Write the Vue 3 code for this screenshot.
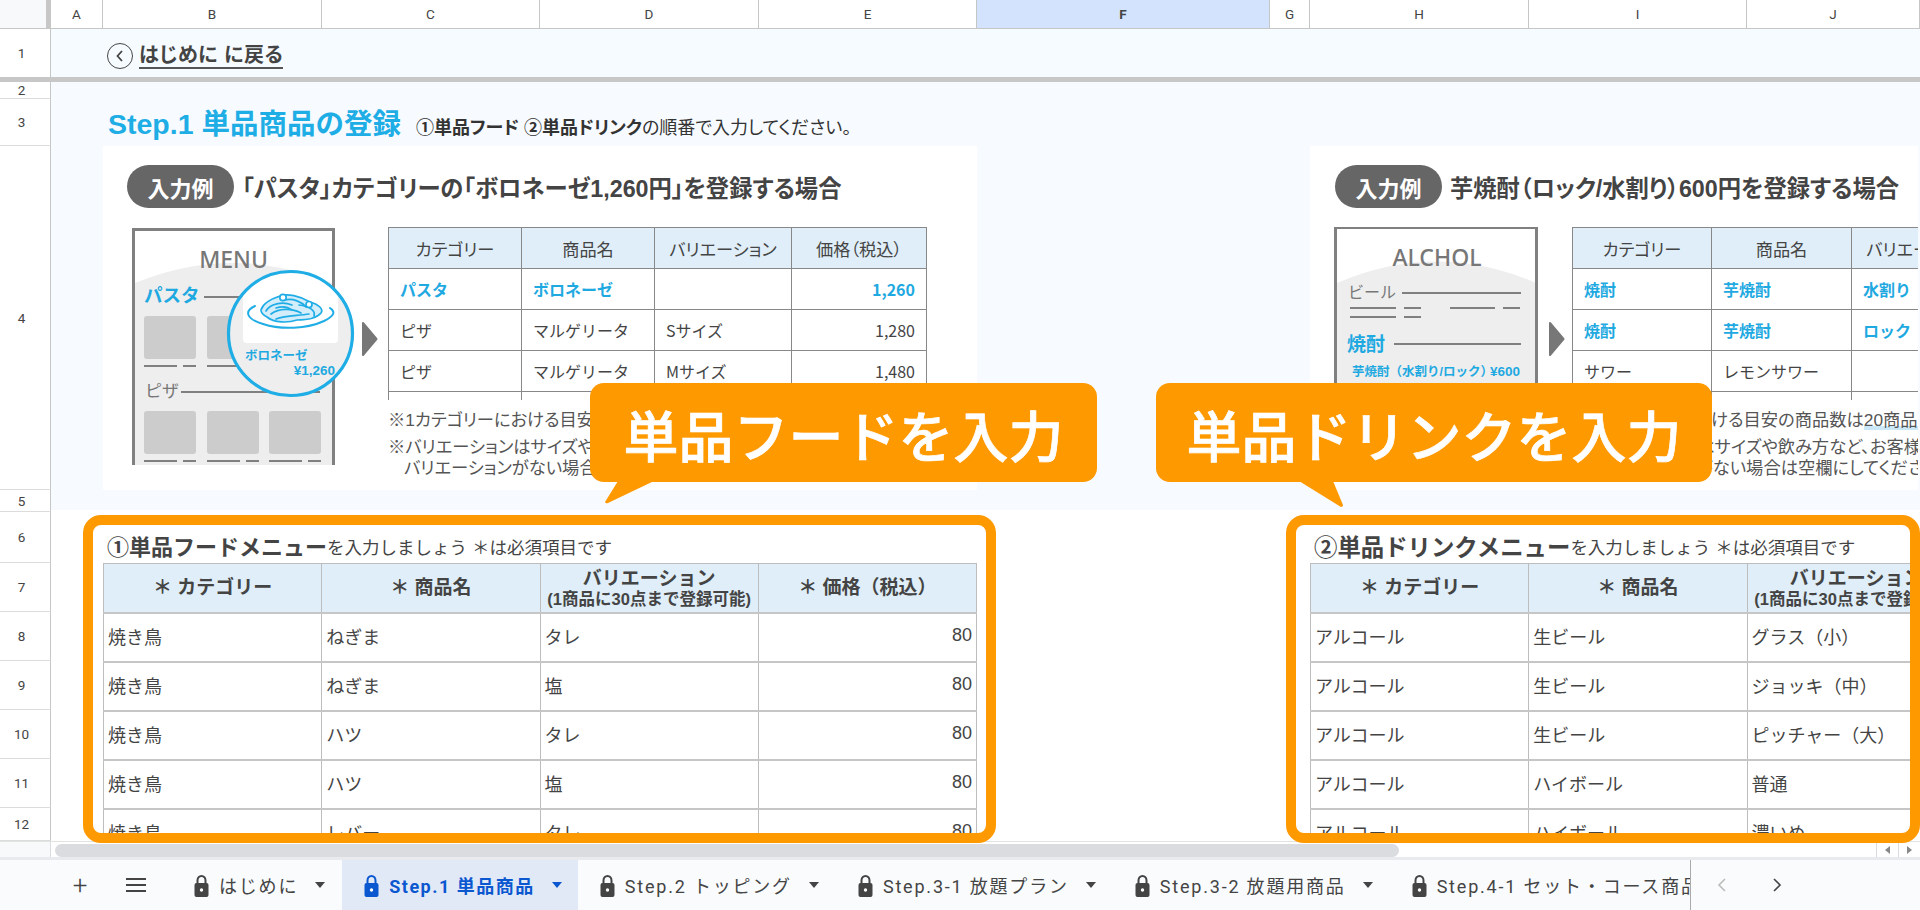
<template>
  <div class="app">
    <!-- 列ヘッダー -->
    <div class="col-head">
      <div class="corner"></div>
      <div
        v-for="col in columns"
        :key="col.name"
        class="col-cell"
        :class="{ selected: col.name === 'F' }"
        :style="{ width: col.w + 'px' }"
      >{{ col.name }}</div>
    </div>

    <div class="sheet">
      <!-- 固定行 -->
      <div class="frozen">
        <div class="row-num first">1</div>
        <div class="back-row">
          <span class="back-circle">
            <svg width="12" height="14" viewBox="0 0 12 14"><path d="M8 2 L3.5 7 L8 12" fill="none" stroke="#444" stroke-width="1.8" /></svg>
          </span>
          <span class="back-text">はじめに に戻る</span>
        </div>
      </div>

      <div class="sheet-body">
        <div class="gutter">
          <div
            v-for="row in rows"
            :key="row.n"
            class="row-num"
            :style="{ height: row.h + 'px' }"
          >{{ row.n }}</div>
        </div>

        <div class="content">
          <div class="band">
            <div class="title-row">
              <span class="title">Step.1 単品商品の登録</span>
              <span class="title-sub"><b>①単品フード ②単品ドリンク</b>の順番で入力してください。</span>
            </div>

            <div class="examples">
              <div v-for="ex in examples" :key="ex.id" class="card" :class="ex.id">
                <div class="card-head">
                  <span class="pill">入力例</span>
                  <span class="card-title">{{ ex.title }}</span>
                </div>
                <div class="card-body">
                  <!-- メニューのイラスト -->
                  <svg v-if="ex.id === 'food'" class="art" width="265" height="238" viewBox="123 227 265 238">
                    <defs><clipPath id="lens"><circle cx="290.5" cy="333.5" r="62" /></clipPath></defs>
                    <path d="M135 283 Q233 243 332 283 V465 H135 Z" fill="#eee" />
                    <path d="M133.5 465 V229.5 H333.5 V465" fill="none" stroke="#808080" stroke-width="3" />
                    <text x="233.5" y="268" class="art-head">MENU</text>
                    <text x="144" y="302" class="art-blue" font-size="18.5">パスタ</text>
                    <line x1="204" y1="297" x2="320" y2="297" class="art-line" />
                    <rect v-for="x in [144, 207, 269]" :key="'a' + x" :x="x" y="316" width="52" height="43" rx="3" fill="#ccc" />
                    <g v-for="x in [144, 207, 269]" :key="'b' + x">
                      <line :x1="x" y1="366" :x2="x + 33" y2="366" class="art-line" />
                      <line :x1="x + 39" y1="366" :x2="x + 52" y2="366" class="art-line" />
                    </g>
                    <text x="145" y="397" class="art-gray" font-size="17">ピザ</text>
                    <line x1="181" y1="392" x2="320" y2="392" class="art-line" />
                    <rect v-for="x in [144, 207, 269]" :key="'c' + x" :x="x" y="411" width="52" height="43" rx="3" fill="#ccc" />
                    <g v-for="x in [144, 207, 269]" :key="'d' + x">
                      <line :x1="x" y1="461" :x2="x + 33" y2="461" class="art-line" />
                      <line :x1="x + 39" y1="461" :x2="x + 52" y2="461" class="art-line" />
                    </g>
                    <circle cx="290.5" cy="333.5" r="62" fill="#eee" />
                    <rect x="243" y="260" width="95" height="83" rx="4" fill="#fff" clip-path="url(#lens)" />
                    <circle cx="290.5" cy="333.5" r="62" fill="none" stroke="#1fade6" stroke-width="3.2" />
                    <g fill="none" stroke="#1fade6" stroke-width="1.7" stroke-linecap="round">
                      <path d="M255 306 C244 311 246 319 263 324 C281 330 307 329 324 321 C334 316 336 312 330 308" stroke-width="2" />
                      <path d="M261 310 C263 303 271 299 280 296 C287 293 300 296 310 302 C318 304 324 309 321 313 C316 319 304 320 297 320 C288 323 274 323 267 317 C263 315 261 313 261 310 Z" fill="#d4edfb" />
                      <path d="M266 311 C270 304 282 301 292 305" />
                      <path d="M271 314 C279 308 292 308 301 313" />
                      <path d="M276 319 C286 315 298 316 309 314" />
                      <path d="M299 305 C308 306 316 310 314 316" />
                      <path d="M285 300 C293 298 302 302 306 307" />
                      <path d="M276 308 C282 306 288 307 292 310" />
                      <circle cx="283" cy="297.5" r="3.2" fill="#fff" />
                      <circle cx="309" cy="304.5" r="3" fill="#fff" />
                    </g>
                    <text x="245" y="360" class="art-blue" font-size="12.5">ボロネーゼ</text>
                    <text x="335" y="375" class="art-blue art-end" font-size="13.5">¥1,260</text>
                    <path d="M363 323 L376.5 339 L363 355 Z" fill="#777" stroke="#777" stroke-width="2" stroke-linejoin="round" />
                  </svg>
                  <svg v-else class="art" width="242" height="238" viewBox="1330 227 242 238">
                    <path d="M1337 283 Q1437 240 1536 283 V465 H1337 Z" fill="#eee" />
                    <path d="M1335.5 465 V227.5 H1536.5 V465" fill="none" stroke="#808080" stroke-width="3" />
                    <text x="1437" y="266" class="art-head">ALCHOL</text>
                    <text x="1348" y="298" class="art-gray" font-size="16">ビール</text>
                    <line x1="1402" y1="293" x2="1521" y2="293" class="art-line" />
                    <g class="art-line">
                      <line x1="1350" y1="308" x2="1396" y2="308" />
                      <line x1="1404" y1="308" x2="1421" y2="308" />
                      <line x1="1450" y1="308" x2="1495" y2="308" />
                      <line x1="1503" y1="308" x2="1520" y2="308" />
                      <line x1="1350" y1="317" x2="1396" y2="317" />
                      <line x1="1404" y1="317" x2="1421" y2="317" />
                    </g>
                    <text x="1347" y="351" class="art-blue" font-size="19">焼酎</text>
                    <line x1="1394" y1="344" x2="1521" y2="344" class="art-line" />
                    <text x="1352" y="376" class="art-blue" font-size="12.5">芋焼酎（水割り/ロック）</text>
                    <text x="1520" y="376" class="art-blue art-end" font-size="13.5">¥600</text>
                    <path d="M1550 323 L1563.5 339 L1550 355 Z" fill="#777" stroke="#777" stroke-width="2" stroke-linejoin="round" />
                  </svg>

                  <div class="ex-side">
                    <div class="ex-table-wrap">
                      <table class="ex-table">
                        <colgroup><col v-for="w in ex.cols" :key="w" :style="{ width: w + 'px' }" /></colgroup>
                        <tr>
                          <th>カテゴリー</th><th>商品名</th><th>バリエーション</th><th>価格（税込）</th>
                        </tr>
                        <tr v-for="(r, i) in ex.rows" :key="i" :class="{ hit: r.hit }">
                          <td>{{ r.cat }}</td>
                          <td>{{ r.name }}</td>
                          <td>{{ r.vari }}</td>
                          <td class="num">{{ r.price }}</td>
                        </tr>
                        <tr><td></td><td></td><td></td><td></td></tr>
                      </table>
                    </div>
                    <div class="notes">
                      <p>※1カテゴリーにおける目安の商品数は<span class="mark">20商品</span></p>
                      <p class="second">※バリエーションはサイズや飲み方など、お客様</p>
                      <p class="third">バリエーションがない場合は空欄にしてください。</p>
                    </div>
                  </div>
                </div>
              </div>
            </div>
          </div>

          <!-- 入力シート -->
          <div class="menus">
            <div v-for="m in menus" :key="m.id" class="menu" :class="m.id">
              <div class="menu-label">
                <b>{{ m.label }}</b><span>を入力しましょう ＊は必須項目です</span>
              </div>
              <table class="menu-table">
                <tr class="menu-head">
                  <th>＊ カテゴリー</th>
                  <th>＊ 商品名</th>
                  <th class="vari">バリエーション<small>(1商品に30点まで登録可能)</small></th>
                  <th>＊ 価格（税込）</th>
                </tr>
                <tr v-for="(r, i) in m.rows" :key="i">
                  <td>{{ r[0] }}</td>
                  <td>{{ r[1] }}</td>
                  <td>{{ r[2] }}</td>
                  <td class="num">{{ r[3] }}</td>
                </tr>
              </table>
            </div>
          </div>
        </div>
      </div>
    </div>

    <!-- スクロールバー -->
    <div class="scroll-row">
      <div class="scroll-gutter"></div>
      <div class="scroll-thumb"></div>
      <div class="scroll-btns">
        <span><i class="tri-l"></i></span>
        <span><i class="tri-r"></i></span>
      </div>
    </div>

    <!-- シートタブ -->
    <div class="tabs">
      <span class="tab-plus">+</span>
      <span class="tab-menu"><i></i><i></i><i></i></span>
      <div class="tab-list">
        <div v-for="t in tabs" :key="t" class="tab" :class="{ active: t === activeTab }">
          <svg class="lock" width="17" height="23" viewBox="0 0 17 23">
            <path d="M4.5 10 V6.5 a4 4.6 0 0 1 8 0 V10" fill="none" stroke="currentColor" stroke-width="2" />
            <rect x="1.5" y="9" width="14" height="14" rx="2" fill="currentColor" />
            <circle cx="8.5" cy="16" r="1.7" fill="#fff" />
          </svg>
          <span class="tab-name">{{ t }}</span>
          <i class="caret"></i>
        </div>
      </div>
      <svg class="nav" width="12" height="18" viewBox="0 0 12 18"><path d="M9 3 L3 9 L9 15" fill="none" stroke="#bbb" stroke-width="1.6" /></svg>
      <svg class="nav next" width="12" height="18" viewBox="0 0 12 18"><path d="M3 3 L9 9 L3 15" fill="none" stroke="#444" stroke-width="1.6" /></svg>
    </div>

    <!-- 注釈の吹き出しと枠 -->
    <div class="frame frame-food"></div>
    <div class="frame frame-drink"></div>
    <div class="callout callout-food">単品フードを入力</div>
    <div class="callout callout-drink">単品ドリンクを入力</div>
    <svg class="tail" width="1920" height="910" viewBox="0 0 1920 910">
      <path d="M618 481 L605 502 Q606 504 608 503 L654 481 Z" fill="#ff9900" />
      <path d="M1299 481 L1341 507 Q1343 507 1343 505 L1333 481 Z" fill="#ff9900" />
    </svg>
  </div>
</template>

<script setup>
const columns = [
  { name: "A", w: 52 },
  { name: "B", w: 219 },
  { name: "C", w: 218 },
  { name: "D", w: 219 },
  { name: "E", w: 218 },
  { name: "F", w: 293 },
  { name: "G", w: 40 },
  { name: "H", w: 219 },
  { name: "I", w: 218 },
  { name: "J", w: 173 },
];

const rows = [
  { n: 2, h: 17 },
  { n: 3, h: 47 },
  { n: 4, h: 344 },
  { n: 5, h: 22 },
  { n: 6, h: 51 },
  { n: 7, h: 49 },
  { n: 8, h: 49 },
  { n: 9, h: 49 },
  { n: 10, h: 49 },
  { n: 11, h: 49 },
  { n: 12, h: 33 },
];

const examples = [
  {
    id: "food",
    title: "「パスタ」カテゴリーの「ボロネーゼ1,260円」を登録する場合",
    cols: [133, 133, 137, 135],
    rows: [
      { cat: "パスタ", name: "ボロネーゼ", vari: "", price: "1,260", hit: true },
      { cat: "ピザ", name: "マルゲリータ", vari: "Sサイズ", price: "1,280" },
      { cat: "ピザ", name: "マルゲリータ", vari: "Mサイズ", price: "1,480" },
    ],
  },
  {
    id: "drink",
    title: "芋焼酎（ロック/水割り）600円を登録する場合",
    cols: [139, 140, 137, 135],
    rows: [
      { cat: "焼酎", name: "芋焼酎", vari: "水割り", price: "600", hit: true },
      { cat: "焼酎", name: "芋焼酎", vari: "ロック", price: "600", hit: true },
      { cat: "サワー", name: "レモンサワー", vari: "", price: "" },
    ],
  },
];

const menus = [
  {
    id: "food",
    label: "①単品フードメニュー",
    rows: [
      ["焼き鳥", "ねぎま", "タレ", 80],
      ["焼き鳥", "ねぎま", "塩", 80],
      ["焼き鳥", "ハツ", "タレ", 80],
      ["焼き鳥", "ハツ", "塩", 80],
      ["焼き鳥", "レバー", "タレ", 80],
    ],
  },
  {
    id: "drink",
    label: "②単品ドリンクメニュー",
    rows: [
      ["アルコール", "生ビール", "グラス（小）", ""],
      ["アルコール", "生ビール", "ジョッキ（中）", ""],
      ["アルコール", "生ビール", "ピッチャー（大）", ""],
      ["アルコール", "ハイボール", "普通", ""],
      ["アルコール", "ハイボール", "濃いめ", ""],
    ],
  },
];

const tabs = [
  "はじめに",
  "Step.1 単品商品",
  "Step.2 トッピング",
  "Step.3-1 放題プラン",
  "Step.3-2 放題用商品",
  "Step.4-1 セット・コース商品",
];
const activeTab = "Step.1 単品商品";
</script>

<style>
html,
body {
  margin: 0;
  overflow: hidden;
  background: #fff;
}
</style>

<style scoped>
.app {
  position: relative;
  width: 1920px;
  height: 910px;
  overflow: hidden;
  display: flex;
  flex-direction: column;
  font-family: "Liberation Sans", "Noto Sans CJK JP", sans-serif;
  color: #444;
}

/* 列ヘッダー */
.col-head {
  display: flex;
  height: 29px;
  flex: none;
  border-bottom: 1px solid #c4c7c5;
  box-sizing: border-box;
  font-family: Roboto, sans-serif;
  font-size: 13.5px;
}
.corner {
  width: 46px;
  background: #f8f9fa;
  border-right: 5px solid #c7c7c7;
  flex: none;
}
.col-cell {
  flex: none;
  box-sizing: border-box;
  border-right: 1px solid #c4c7c5;
  display: flex;
  align-items: center;
  justify-content: center;
}
.col-cell.selected {
  background: #d3e3fd;
  font-weight: 700;
}

/* シート本体 */
.sheet {
  height: 812px;
  flex: none;
  overflow: hidden;
}
.frozen {
  display: flex;
  height: 53px;
  box-sizing: border-box;
  border-bottom: 5px solid #c7c7c7;
}
.row-num {
  width: 51px;
  flex: none;
  box-sizing: border-box;
  border-right: 1px solid #c4c7c5;
  border-bottom: 1px solid #dcdcdc;
  display: flex;
  align-items: center;
  justify-content: center;
  padding-right: 7px;
  font-family: Roboto, sans-serif;
  font-size: 13.5px;
  background: #fff;
}
.row-num.first {
  border-bottom: none;
}
.back-row {
  flex: 1;
  background: #f5fbff;
  display: flex;
  align-items: center;
  padding-left: 56px;
  gap: 6px;
  padding-top: 6px;
  box-sizing: border-box;
}
.back-circle {
  width: 26px;
  height: 26px;
  box-sizing: border-box;
  border: 1.5px solid #444;
  border-radius: 50%;
  display: flex;
  align-items: center;
  justify-content: center;
}
.back-text {
  font-size: 20px;
  font-weight: 700;
  line-height: 24px;
  border-bottom: 2px solid #555;
  font-feature-settings: "palt";
  letter-spacing: 0.5px;
}
.sheet-body {
  display: flex;
}
.gutter {
  width: 51px;
  flex: none;
}
.content {
  flex: 1;
  min-width: 0;
}

/* 上部の説明エリア */
.band {
  height: 428px;
  background: #f7fbff;
  padding-left: 52px;
  box-sizing: border-box;
  overflow: hidden;
}
.title-row {
  height: 64px;
  box-sizing: border-box;
  padding: 24px 0 0 5px;
  display: flex;
  align-items: baseline;
  gap: 15px;
}
.title {
  font-size: 28.5px;
  line-height: 36px;
  font-weight: 700;
  color: #1fade6;
}
.title-sub {
  font-size: 18px;
  color: #333;
  font-feature-settings: "palt";
}
.title-sub b {
  font-weight: 700;
}
.examples {
  display: flex;
  gap: 333px;
}
.card {
  height: 344px;
  flex: none;
  width: 874px;
  background: #fff;
  overflow: hidden;
}
.card.drink {
  width: 608px;
}
.card-head {
  display: flex;
  align-items: center;
  height: 43px;
  margin-top: 19px;
  padding-left: 24px;
  gap: 8px;
}
.card.drink .card-head {
  padding-left: 25px;
}
.pill {
  width: 107px;
  height: 43px;
  border-radius: 22px;
  background: #666;
  color: #fff;
  font-size: 22px;
  font-weight: 700;
  display: flex;
  align-items: center;
  justify-content: center;
}
.card-title {
  font-size: 23.3px;
  font-weight: 700;
  font-feature-settings: "palt";
  white-space: nowrap;
}
.card-body {
  display: flex;
  margin-top: 19px;
  padding-left: 20px;
}
.art {
  flex: none;
  display: block;
}
.art-head {
  font-family: "Noto Sans", sans-serif;
  font-size: 23px;
  font-weight: 500;
  fill: #777;
  text-anchor: middle;
}
.art-blue {
  font-family: "Liberation Sans", "Noto Sans CJK JP", sans-serif;
  font-weight: 700;
  fill: #1fa9e1;
}
.art-gray {
  font-family: "Noto Sans CJK JP", sans-serif;
  fill: #777;
}
.art-end {
  text-anchor: end;
}
.art-line,
.art-line line {
  stroke: #808080;
  stroke-width: 2;
}
.ex-side {
  flex: none;
  width: 539px;
}
.ex-table-wrap {
  height: 173px;
  overflow: hidden;
}
.ex-table {
  border-collapse: collapse;
  table-layout: fixed;
  width: 538px;
  font-family: "Noto Sans CJK JP", sans-serif;
  font-size: 16px;
}
.ex-table th,
.ex-table td {
  border: 1px solid #888;
  height: 41px;
  box-sizing: border-box;
  padding: 0 11px;
  white-space: nowrap;
}
.ex-table th {
  background: #dfeef8;
  font-weight: 400;
  font-size: 17.2px;
  padding: 0;
  font-feature-settings: "palt";
}
.ex-table .num {
  text-align: right;
}
.ex-table .hit td {
  color: #1fa9e1;
  font-weight: 700;
}
.notes {
  margin-top: 10px;
  font-size: 17.3px;
  line-height: 20px;
  color: #555;
  white-space: nowrap;
  font-feature-settings: "palt";
}
.notes p {
  margin: 0;
}
.notes .second {
  margin-top: 7px;
}
.notes .third {
  margin-top: 1px;
  padding-left: 16px;
}
.mark {
  background: linear-gradient(transparent 78%, #cbe8f8 78%);
}

/* 入力シート */
.menus {
  display: flex;
  gap: 333px;
  padding: 2px 0 0 52px;
}
.menu {
  flex: none;
  width: 874px;
  overflow: hidden;
}
.menu.drink {
  width: 610px;
}
.menu-label {
  height: 51px;
  display: flex;
  align-items: flex-end;
  padding: 0 0 2px 4px;
  box-sizing: border-box;
  white-space: nowrap;
  font-size: 17.5px;
  line-height: 26px;
}
.menu-label b {
  font-size: 22px;
}
.menu.drink .menu-label b {
  font-size: 23.4px;
}
.menu-table {
  border-collapse: collapse;
  table-layout: fixed;
  width: 874px;
  font-size: 18px;
}
.menu-table th,
.menu-table td {
  border: 1px solid #bdbdbd;
  border-bottom: 2px solid #c6c6c6;
  height: 49px;
  box-sizing: border-box;
  padding: 0 4px 3px;
  white-space: nowrap;
  overflow: hidden;
}
.menu-table th {
  background: #dfeef8;
  font-weight: 700;
  font-size: 19px;
  line-height: 22px;
  padding: 0;
}
.menu-table .vari small {
  display: block;
  font-size: 16.5px;
  line-height: 18px;
}
.menu-table .num {
  text-align: right;
}

/* スクロールバー */
.scroll-row {
  display: flex;
  height: 19px;
  flex: none;
  box-sizing: border-box;
  border-top: 1px solid #e1e3e1;
  border-bottom: 3px solid #e8eaed;
}
.scroll-gutter {
  width: 51px;
  background: #f8f9fa;
  border-right: 1px solid #dadce0;
  box-sizing: border-box;
  flex: none;
}
.scroll-thumb {
  width: 1344px;
  height: 13px;
  margin: 2px 0 0 4px;
  border-radius: 7px;
  background: #dadce0;
  flex: none;
}
.scroll-btns {
  margin-left: auto;
  display: flex;
}
.scroll-btns span {
  width: 21px;
  border-left: 1px solid #dadce0;
  display: flex;
  align-items: center;
  justify-content: center;
}
.tri-l {
  border: 4px solid transparent;
  border-right: 5px solid #888;
  border-left: none;
}
.tri-r {
  border: 4px solid transparent;
  border-left: 5px solid #888;
  border-right: none;
}

/* タブ */
.tabs {
  flex: none;
  height: 50px;
  background: #f9fbfd;
  display: flex;
  align-items: center;
  position: relative;
  font-family: Roboto, "Noto Sans CJK JP", sans-serif;
  font-size: 18px;
  letter-spacing: 1.8px;
}
.tab-plus {
  width: 24px;
  margin-left: 68px;
  text-align: center;
  font-size: 26px;
  letter-spacing: 0;
  line-height: 26px;
  font-weight: 300;
}
.tab-menu {
  width: 20px;
  margin-left: 34px;
  display: flex;
  flex-direction: column;
  gap: 4px;
}
.tab-menu i {
  height: 2px;
  background: #444;
}
.tab-list {
  margin-left: 26px;
  width: 1519px;
  height: 50px;
  flex: none;
  display: flex;
  overflow: hidden;
  border-right: 1px solid #aaa;
  box-sizing: border-box;
}
.tab {
  flex: none;
  height: 50px;
  display: flex;
  align-items: center;
  padding: 0 17px 0 21px;
  white-space: nowrap;
  color: #444;
}
.tab.active {
  background: #e1e9f7;
  color: #0b57d0;
  font-weight: 700;
  letter-spacing: 1.5px;
  padding-right: 16px;
}
.lock {
  flex: none;
  margin-right: 9px;
}
.caret {
  margin-left: 17px;
  border: 5.5px solid transparent;
  border-top: 6px solid currentColor;
  border-bottom: none;
}
.nav {
  margin-left: 25px;
}
.nav.next {
  margin-left: 43px;
}

/* 枠と吹き出し */
.frame {
  position: absolute;
  top: 515px;
  height: 328px;
  box-sizing: border-box;
  border: 10px solid #ff9900;
  border-radius: 18px;
  pointer-events: none;
}
.frame-food {
  left: 83px;
  width: 913px;
}
.frame-drink {
  left: 1286px;
  width: 634px;
}
.callout {
  position: absolute;
  top: 383px;
  height: 99px;
  box-sizing: border-box;
  background: #ff9900;
  border-radius: 14px;
  color: #fff;
  font-family: "Noto Sans CJK JP", sans-serif;
  font-size: 55px;
  font-weight: 500;
  -webkit-text-stroke: 0.7px #fff;
  display: flex;
  align-items: center;
  justify-content: center;
  white-space: nowrap;
}
.callout-food {
  left: 590px;
  width: 507px;
}
.callout-drink {
  left: 1156px;
  width: 556px;
}
.tail {
  position: absolute;
  left: 0;
  top: 0;
  pointer-events: none;
}
</style>
